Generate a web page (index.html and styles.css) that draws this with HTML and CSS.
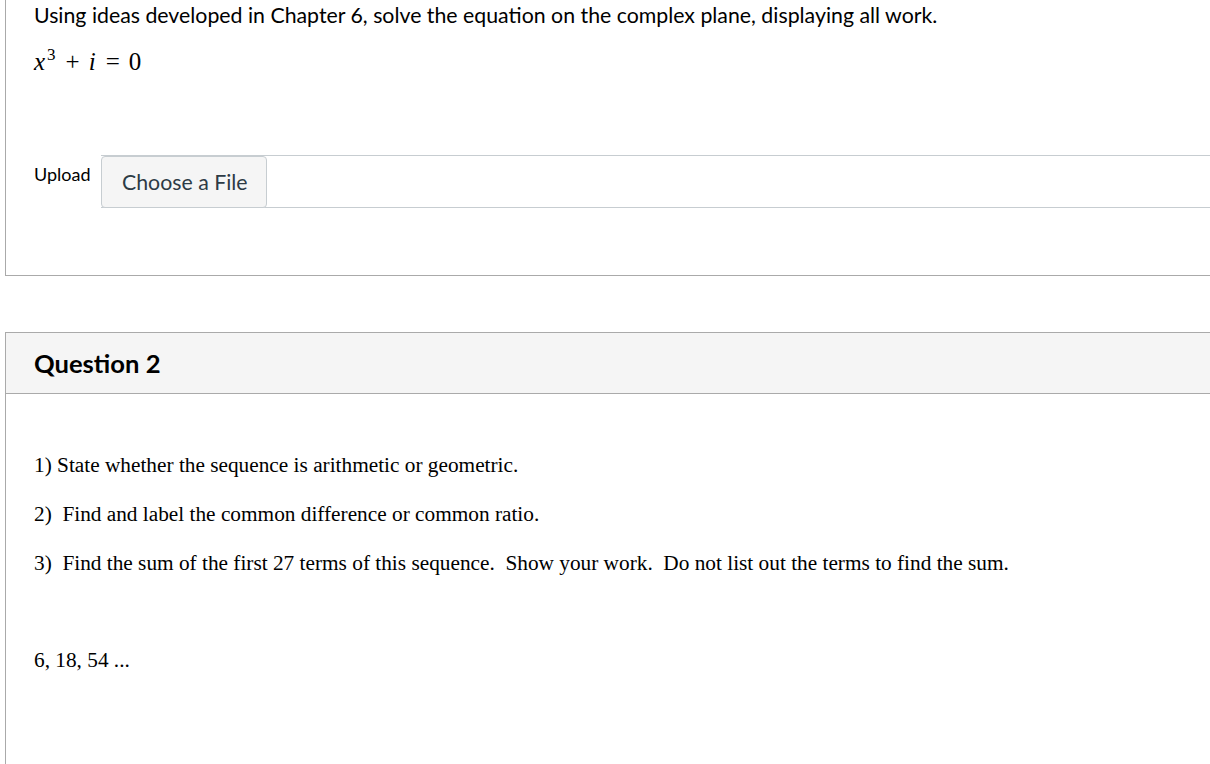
FILE: index.html
```html
<!DOCTYPE html>
<html>
<head>
<meta charset="utf-8">
<link rel="stylesheet" href="styles.css">
</head>
<body>
<div class="page">
  <section class="q1">
    <p class="prompt">Using ideas developed in Chapter 6, solve the equation on the complex plane, displaying all work.</p>
    <p class="math"><span class="mi">x</span><sup class="sup">3</sup><span class="op">+</span><span class="mi">i</span><span class="op">=</span><span class="mn">0</span></p>
    <div class="upload">
      <span class="upload-label">Upload</span>
      <div class="file-field">
        <span class="file-btn">Choose a File</span>
      </div>
    </div>
  </section>

  <section class="q2">
    <header class="q2-head"><h2>Question 2</h2></header>
    <div class="q2-body">
      <p class="line first">1) State whether the sequence is arithmetic or geometric.</p>
      <p class="line">2)&nbsp; Find and label the common difference or common ratio.</p>
      <p class="line">3)&nbsp; Find the sum of the first 27 terms of this sequence.&nbsp; Show your work.&nbsp; Do not list out the terms to find the sum.</p>
      <p class="line seq">6, 18, 54 ...</p>
    </div>
  </section>
</div>
</body>
</html>
```

FILE: styles.css
```css
html, body {
  margin: 0;
  padding: 0;
  background: #fff;
  overflow: hidden;
}
body {
  font-family: Lato, "Liberation Sans", sans-serif;
  color: #000;
}
.page {
  margin-left: 5px;
  width: 1260px;
  height: 764px;
  display: flex;
  flex-direction: column;
}
.q1 {
  border-left: 1px solid #aaaaaa;
  border-bottom: 1px solid #aaaaaa;
  height: 276px;
  flex: none;
  padding-left: 28px;
  box-sizing: border-box;
}
.prompt {
  margin: 0;
  padding-top: 2px;
  font-size: 21.3px;
  line-height: 26px;
}
.math {
  margin: 20px 0 0;
  font-family: "Liberation Serif", "Times New Roman", serif;
  font-size: 25px;
  line-height: 28px;
  display: flex;
  align-items: baseline;
}
.mi {
  font-style: italic;
}
.sup {
  font-size: 17px;
  position: relative;
  top: -10px;
  margin-left: 2px;
  vertical-align: baseline;
}
.op {
  margin: 0 9px 0 10px;
}
.upload {
  display: flex;
  align-items: flex-start;
  margin-top: 76px;
}
.upload-label {
  font-size: 18px;
  line-height: 22px;
  margin-top: 8px;
  width: 67px;
}
.file-field {
  flex: 1;
  border-top: 1px solid #c7cdd1;
  border-bottom: 1px solid #c7cdd1;
  height: 51px;
  display: flex;
}
.file-btn {
  box-sizing: border-box;
  width: 166px;
  height: 52px;
  background: #f5f5f5;
  border: 1px solid #c7cdd1;
  border-radius: 4px;
  color: #2d3b45;
  font-size: 21.3px;
  display: flex;
  align-items: center;
  padding-left: 20px;
}
.q2 {
  margin-top: 56px;
  border-top: 1px solid #aaaaaa;
  border-left: 1px solid #aaaaaa;
  flex: 1;
  min-height: 0;
}
.q2-head {
  background: #f5f5f5;
  height: 60px;
  border-bottom: 1px solid #aaaaaa;
  padding-left: 28px;
  display: flex;
  align-items: center;
}
.q2-head h2 {
  margin: 0;
  font-size: 25.6px;
  font-weight: 700;
  line-height: 30px;
}
.q2-body {
  padding-left: 28px;
  padding-top: 59px;
  font-family: "Liberation Serif", "Times New Roman", serif;
  font-size: 21.3px;
}
.line {
  margin: 0 0 25px;
  line-height: 24px;
}
.seq {
  margin-top: 73px;
}
```
